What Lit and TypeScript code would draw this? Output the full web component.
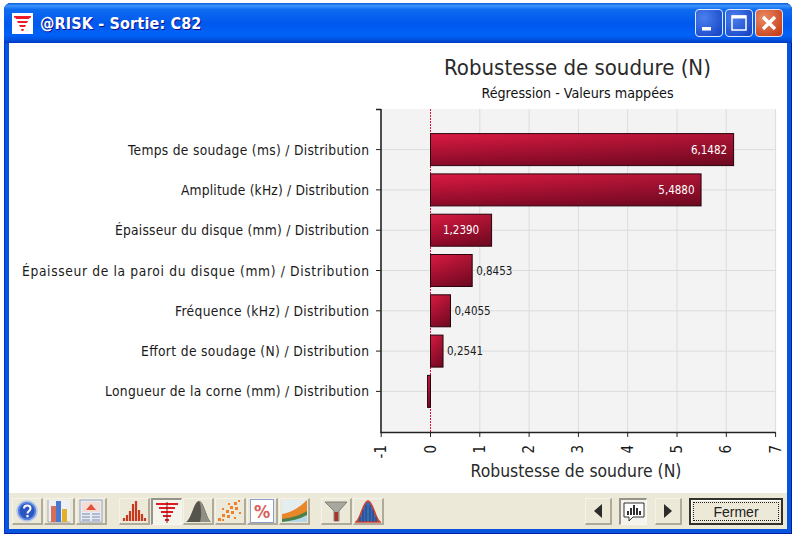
import { html, css, svg, LitElement } from 'lit';
import { customElement } from 'lit/decorators.js';

const X0 = 430.5;
const XSTEP = 49.3;
const sx = (v: number) => X0 + v * XSTEP;
const rowY = (i: number) => 149.6 + i * 40.3;

// labelW: label widths read off the reference, the original font's hinting differs from ours
const rows = [
  { label: 'Temps de soudage (ms) / Distribution', labelW: 241, value: 6.1482, text: '6,1482', inside: 'end' },
  { label: 'Amplitude (kHz) / Distribution', labelW: 188, value: 5.488, text: '5,4880', inside: 'end' },
  { label: 'Épaisseur du disque (mm) / Distribution', labelW: 254, value: 1.239, text: '1,2390', inside: 'mid' },
  { label: 'Épaisseur de la paroi du disque (mm) / Distribution', labelW: 347, value: 0.8453, text: '0,8453', inside: '' },
  { label: 'Fréquence (kHz) / Distribution', labelW: 194, value: 0.4055, text: '0,4055', inside: '' },
  { label: 'Effort de soudage (N) / Distribution', labelW: 228, value: 0.2541, text: '0,2541', inside: '' },
  { label: 'Longueur de la corne (mm) / Distribution', labelW: 264, value: -0.06, text: '', inside: '' },
];

const logo = svg`
  <path d="M3 4h15l-1 2H4z M5 8h11l-1 2H6z M7 12h7l-1 2H8z M9 16h3l-.7 2H9.7z" fill="#ee1c25"/>
  <rect x="2" y="3" width="17" height="1.6" fill="#ee1c25"/>`;

const icons = {
  help: svg`
    <circle cx="13" cy="13" r="10" fill="#5a86dc" stroke="#b8c8ea" stroke-width="1.5"/>
    <circle cx="13" cy="13" r="7.5" fill="#2b55c0"/>
    <path d="M10 10.5c0-4 6.5-4 6.5 0 0 2.5-3 2.5-3 5" fill="none" stroke="#fff" stroke-width="2"/>
    <rect x="12.4" y="17" width="2.2" height="2.2" fill="#fff"/>`,
  bars: svg`
    <rect x="2" y="2" width="22" height="22" fill="#eef0f4"/>
    <path d="M2 2v22h22" fill="none" stroke="#a8a8b0"/>
    <rect x="5" y="8" width="5" height="16" fill="#d4705a"/>
    <rect x="10" y="3" width="5" height="21" fill="#4a78d0"/>
    <rect x="16" y="11" width="5" height="13" fill="#e4b028"/>`,
  report: svg`
    <rect x="2" y="2" width="22" height="22" fill="#e6ebf4" stroke="#9aa3b8"/>
    <rect x="4" y="4" width="18" height="10" fill="#f2dcd4"/>
    <path d="M8 12l5-6 5 6z" fill="#e0503a"/>
    <path d="M4 16h8M4 19h8M4 22h8M14 16h8M14 19h8M14 22h8" stroke="#7a8aa8"/>`,
  hist: svg`
    <path d="M3 23v-3M6 23v-6M9 23v-10M12 23V6M15 23V3M18 23v-11M21 23v-7M24 23v-3" stroke="#c8381e" stroke-width="2.2"/>`,
  tornado: svg`
    <path d="M2 5h22M5 9h16M7 13h12M9 17h8M11 21h4" stroke="#e01a22" stroke-width="2.2"/>
    <path d="M13 3v21" stroke="#8a1014" stroke-width="1"/>`,
  mountain: svg`
    <path d="M1 24C6 22 9 3 14 3s8 19 12 21z" fill="#55554e"/>
    <path d="M14 3c2 3 3 14 1 21h11C22 22 18 3 14 3z" fill="#8f8f82"/>`,
  scatter: svg`
    <g fill="#ee8030">
      <rect x="1" y="20" width="3" height="3"/><rect x="5" y="16" width="3" height="3"/><rect x="5" y="21" width="2" height="2"/>
      <rect x="9" y="12" width="3" height="3"/><rect x="10" y="17" width="3" height="3"/><rect x="13" y="8" width="3" height="3"/>
      <rect x="14" y="13" width="3" height="3"/><rect x="17" y="4" width="3" height="3"/><rect x="18" y="9" width="3" height="3"/>
      <rect x="17" y="19" width="2" height="2"/><rect x="11" y="5" width="2" height="2"/><rect x="21" y="2" width="2" height="2"/>
      <rect x="5" y="10" width="2" height="2"/><rect x="22" y="14" width="2" height="2"/>
    </g>`,
  percent: svg`
    <rect x="1.5" y="1.5" width="23" height="23" fill="#fff" stroke="#8aa0c8"/>
    <text x="13" y="19.5" font-family="Liberation Sans, sans-serif" font-size="18" font-weight="700" text-anchor="middle" fill="#d8605a">%</text>`,
  curves: svg`
    <rect x="1" y="2" width="25" height="22" fill="#e4eef0"/>
    <path d="M1 24V18C9 17 18 13 26 4v20z" fill="#4a8048"/>
    <path d="M1 21V16C9 15 18 10 26 2v11C18 18 9 20 1 21z" fill="#e8862a"/>
    <path d="M1 24c9-1 18-3 25-7v7z" fill="#b8d8e8"/>`,
  funnel: svg`
    <path d="M2 4h22l-8 9v10h-5V13z" fill="#a8a89e" stroke="#707068" stroke-width=".8"/>
    <rect x="11.5" y="14" width="3.5" height="9" fill="#a8342a"/>`,
  bell: svg`
    <path d="M1 24C6 21 8 3 13 3s7 18 12 21z" fill="#3a6ab8" stroke="#d8402e" stroke-width="1.6"/>
    <path d="M5 24V19M8 24V12M11 24V7M15 24V7M18 24V12M21 24V19" stroke="#20406f" stroke-width=".9"/>`,
  left: svg`<path d="M17 6v14l-8-7z" fill="#2c2c2c"/>`,
  right: svg`<path d="M9 6v14l8-7z" fill="#2c2c2c"/>`,
  tips: svg`
    <path d="M3 4h20v14H12l-4 4v-4H3z" fill="#fff" stroke="#303030"/>
    <path d="M7 16v-4M10 16V9M13 16V6M16 16V9M19 16v-4" stroke="#303030" stroke-width="2"/>`,
};

type IconName = keyof typeof icons;

@customElement('app-root')
export class AppRoot extends LitElement {
  static styles = css`
    :host {
      display: block;
      width: 795px;
      height: 537px;
      padding: 3px 3px 3px 4px;
      box-sizing: border-box;
      background: #fff;
      font-family: "Liberation Sans", sans-serif;
    }
    .window {
      height: 100%;
      display: flex;
      flex-direction: column;
      background: #0855dd;
      border-radius: 7px 7px 0 0;
      box-shadow: inset 1px 0 #0831d9, inset -1px 0 #001ea0, inset 0 -1px #001ea0;
    }
    .title {
      height: 40px;
      flex: none;
      display: flex;
      align-items: center;
      padding: 0 9px 0 8px;
      border-radius: 7px 7px 0 0;
      background: linear-gradient(#0a5bd6 0, #3d95ff 7%, #0f6cf0 16%, #0058ee 50%, #0062f8 80%, #0052e0 92%, #0038c0 100%);
    }
    .logo {
      width: 21px;
      height: 21px;
      background: #fff;
      flex: none;
      margin-right: 7px;
    }
    .caption {
      flex: 1;
      color: #fff;
      font: 700 16px "DejaVu Sans", sans-serif;
      font-stretch: condensed;
      letter-spacing: 0.15px;
      text-shadow: 1px 1px #0f1089;
    }
    .caps {
      display: flex;
      gap: 2px;
    }
    .cap {
      width: 28px;
      height: 28px;
      box-sizing: border-box;
      border: 1px solid #dfe8fb;
      border-radius: 4px;
      background: radial-gradient(circle at 30% 30%, #4a80ee, #1a48c8 85%);
      display: block;
    }
    .cap.close {
      background: radial-gradient(circle at 30% 30%, #ea8a62, #c8401c 85%);
    }
    .client {
      flex: 1;
      min-height: 0;
      margin: 0 5px 5px;
      display: flex;
      flex-direction: column;
      background: #fff;
    }
    .chart {
      flex: 1;
      min-height: 0;
      display: block;
    }
    .toolbar {
      flex: none;
      height: 36px;
      background: #ece9d8;
      display: flex;
      align-items: center;
      padding: 1px 4px 0 3px;
      box-sizing: border-box;
    }
    .group {
      display: flex;
      gap: 1px;
    }
    .group.first {
      margin-right: 12px;
    }
    .group.second {
      margin-right: 11px;
    }
    .spacer {
      flex: 1;
    }
    .btn {
      width: 31px;
      height: 27px;
      box-sizing: border-box;
      border-style: solid;
      border-width: 1px 2px 2px 1px;
      border-color: #f6f4ea #aeab9a #aeab9a #f6f4ea;
      background: #ece9d8;
      display: flex;
      align-items: center;
      justify-content: center;
    }
    .btn.on {
      background: #f5f4ec;
      border-width: 2px 1px 1px 2px;
      border-color: #96938a #f8f7f0 #f8f7f0 #96938a;
    }
    .btn svg {
      width: 26px;
      height: 26px;
      flex: none;
      display: block;
    }
    .nav {
      width: 27px;
    }
    .nav.tips {
      width: 28px;
      margin: 0 8px 0 7px;
    }
    .fermer {
      width: 94px;
      height: 27px;
      margin-left: 7px;
      box-sizing: border-box;
      border: 2px solid #33322a;
      padding: 2px;
      background: #ece9d8;
      box-shadow: inset 1px 1px #fff;
      font-size: 14px;
      color: #222;
      display: flex;
    }
    .fermer span {
      flex: 1;
      border: 1px dotted #222;
      display: flex;
      align-items: center;
      justify-content: center;
    }
    text {
      font-family: "DejaVu Sans", sans-serif;
      font-stretch: condensed;
    }
    .main-title {
      font-size: 22px;
      fill: #2a2a2a;
    }
    .sub-title {
      font-size: 14.2px;
      fill: #111;
    }
    .cat {
      font-size: 13.7px;
      fill: #1a1a1a;
    }
    .val {
      font-size: 11.5px;
      fill: #1a1a1a;
    }
    .val.in {
      fill: #fff;
    }
    .tick {
      font-size: 15px;
      fill: #1a1a1a;
    }
    .axis-title {
      font-size: 17.4px;
      fill: #2a2a2a;
    }
  `;

  private btn(name: IconName, cls = '') {
    return html`<div class="btn ${cls}"><svg viewBox="0 0 26 26">${icons[name]}</svg></div>`;
  }

  // coordinates below are page pixels, the group undoes the client area's offset (9,43)
  private chart() {
    const ticks = [-1, 0, 1, 2, 3, 4, 5, 6, 7];
    return svg`
      <defs>
        <linearGradient id="v" x1="0" y1="0" x2="0" y2="1">
          <stop offset="0" stop-color="#dc1a42"/>
          <stop offset="1" stop-color="#880a28"/>
        </linearGradient>
        <linearGradient id="h" x1="0" y1="0" x2="1" y2="0">
          <stop offset="0" stop-color="#000" stop-opacity="0"/>
          <stop offset="1" stop-color="#000" stop-opacity=".2"/>
        </linearGradient>
      </defs>
      <g transform="translate(-9,-43)">
        <text class="main-title" x="577.5" y="75" text-anchor="middle">Robustesse de soudure (N)</text>
        <text class="sub-title" x="577.5" y="98" text-anchor="middle">Régression - Valeurs mappées</text>

        <rect x="381" y="109" width="394.5" height="323" fill="#f3f3f3"/>
        ${ticks.slice(2).map(t => svg`<path d="M${sx(t)} 109V432" stroke="#dcdcdc"/>`)}
        ${rows.map((_, i) => svg`<path d="M381 ${rowY(i)}H775" stroke="#dcdcdc"/>`)}
        <path d="M430.5 109V432" stroke="#e0103c" stroke-dasharray="2 1"/>

        ${rows.map((r, i) => {
          const y = rowY(i) - 16;
          const x1 = Math.min(sx(0), sx(r.value));
          const w = Math.abs(sx(r.value) - sx(0));
          return svg`
            <text class="cat" x="369" y=${rowY(i) + 5} text-anchor="end" textLength=${r.labelW}>${r.label}</text>
            <path d="M376 ${rowY(i)}h5" stroke="#222"/>
            <rect x=${x1} y=${y} width=${w} height="32" fill="url(#v)" stroke="#2a0510"/>
            <rect x=${x1} y=${y} width=${w} height="32" fill="url(#h)"/>
            ${r.inside === 'end'
              ? svg`<text class="val in" x=${sx(r.value) - 6.5} y=${rowY(i) + 4} text-anchor="end">${r.text}</text>`
              : r.inside === 'mid'
                ? svg`<text class="val in" x=${(sx(0) + sx(r.value)) / 2} y=${rowY(i) + 4} text-anchor="middle">${r.text}</text>`
                : svg`<text class="val" x=${sx(r.value) + 4} y=${rowY(i) + 4}>${r.text}</text>`}
          `;
        })}

        <path d="M376 109.5h5M381 109V432.5H775.5" fill="none" stroke="#222" stroke-width="1.6"/>
        ${ticks.map(t => svg`
          <path d="M${sx(t)} 432v5" stroke="#222"/>
          <text class="tick" transform="translate(${sx(t) + 5},445) rotate(-90)" text-anchor="end">${t}</text>
        `)}
        <text class="axis-title" x="576" y="477" text-anchor="middle">Robustesse de soudure (N)</text>
      </g>
    `;
  }

  render() {
    return html`
      <div class="window">
        <div class="title">
          <svg class="logo" viewBox="0 0 21 21">${logo}</svg>
          <div class="caption">@RISK - Sortie: C82</div>
          <div class="caps">
            <svg class="cap" viewBox="0 0 26 26"><rect x="6" y="17" width="9" height="3.5" fill="#fff"/></svg>
            <svg class="cap" viewBox="0 0 26 26"><path d="M6 6h14v14H6z" fill="none" stroke="#fff" stroke-width="1.5"/><rect x="6" y="5.5" width="14" height="3" fill="#fff"/></svg>
            <svg class="cap close" viewBox="0 0 26 26"><path d="M7 7l12 12M19 7L7 19" stroke="#fff" stroke-width="3.4"/></svg>
          </div>
        </div>
        <div class="client">
          <svg class="chart" viewBox="0 0 778 450" width="778" height="450">${this.chart()}</svg>
          <div class="toolbar">
            <div class="group first">
              ${this.btn('help')}${this.btn('bars')}${this.btn('report')}
            </div>
            <div class="group second">
              ${this.btn('hist')}${this.btn('tornado', 'on')}${this.btn('mountain')}${this.btn('scatter')}${this.btn('percent')}${this.btn('curves')}
            </div>
            <div class="group">
              ${this.btn('funnel')}${this.btn('bell')}
            </div>
            <div class="spacer"></div>
            ${this.btn('left', 'nav')}
            ${this.btn('tips', 'on nav tips')}
            ${this.btn('right', 'nav')}
            <div class="fermer"><span>Fermer</span></div>
          </div>
        </div>
      </div>
    `;
  }
}
